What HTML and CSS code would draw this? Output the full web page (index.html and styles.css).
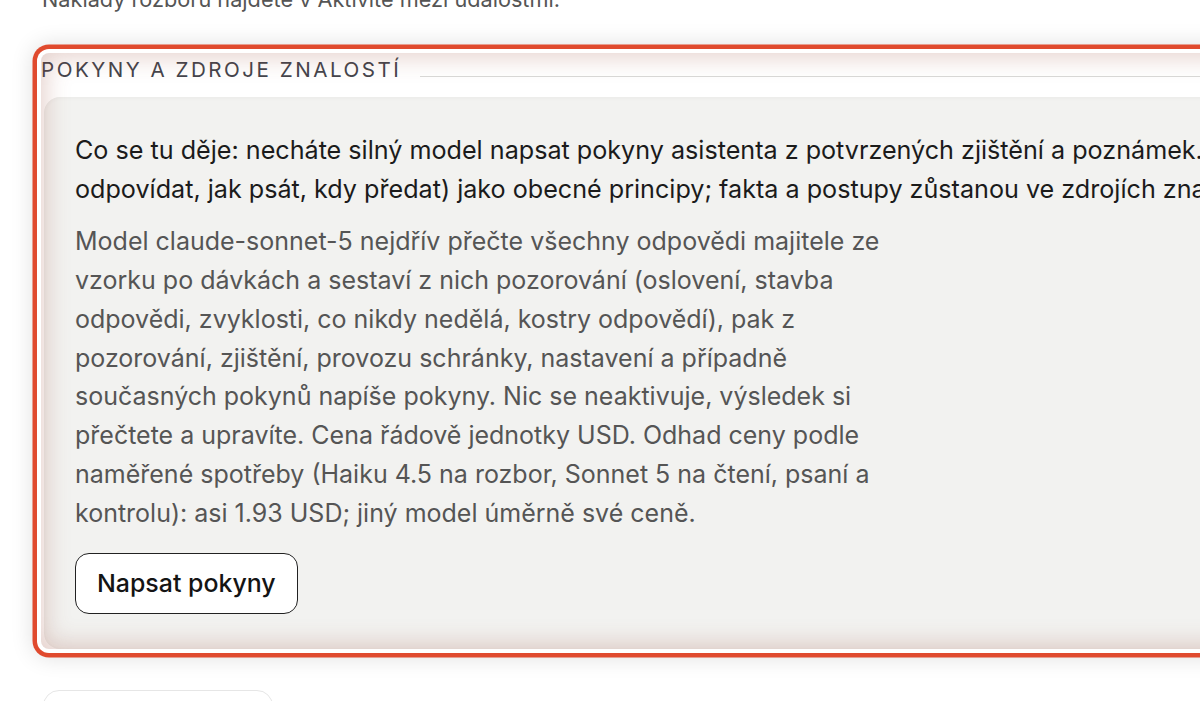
FILE: index.html
```html
<!DOCTYPE html>
<html lang="cs">
<head>
<meta charset="utf-8">
<title>Pokyny a zdroje znalostí</title>
<link rel="stylesheet" href="styles.css">
</head>
<body>
<main class="page">
  <p class="note">Náklady rozboru najdete v Aktivitě mezi událostmi.</p>

  <section class="panel is-highlighted">
    <div class="legend">
      <h2 class="legend-title">POKYNY A ZDROJE ZNALOSTÍ</h2>
      <div class="legend-rule"></div>
    </div>
    <div class="card">
      <p class="lead">Co se tu děje: necháte silný model napsat pokyny asistenta z potvrzených zjištění a poznámek. Pokyny popíší chování (jak<br>odpovídat, jak psát, kdy předat) jako obecné principy; fakta a postupy zůstanou ve zdrojích znalostí.</p>
      <p class="desc">Model claude-sonnet-5 nejdřív přečte všechny odpovědi majitele ze vzorku po dávkách a sestaví z nich pozorování (oslovení, stavba odpovědi, zvyklosti, co nikdy nedělá, kostry odpovědí), pak z pozorování, zjištění, provozu schránky, nastavení a případně současných pokynů napíše pokyny. Nic se neaktivuje, výsledek si přečtete a upravíte. Cena řádově jednotky USD. Odhad ceny podle naměřené spotřeby (Haiku 4.5 na rozbor, Sonnet 5 na čtení, psaní a kontrolu): asi 1.93 USD; jiný model úměrně své ceně.</p>
      <button class="btn" type="button">Napsat pokyny</button>
    </div>
  </section>

  <div class="next-block"></div>
</main>
</body>
</html>
```

FILE: styles.css
```css
html, body {
  margin: 0;
  padding: 0;
  background: #ffffff;
  overflow: hidden;
}

body {
  font-family: Inter, "Noto Sans", "DejaVu Sans", sans-serif;
  color: #1b1b1b;
}

.page {
  width: 1700px;
  padding-left: 41px;
  margin-top: -20.5px;
}

.note {
  margin: 0 0 0 1px;
  font-size: 21.7px;
  line-height: 38.9px;
  color: #555555;
}

.panel {
  position: relative;
  margin-top: 34.5px;
  border-radius: 8px;
  background: #ffffff;
  box-shadow:
    0 0 0 4px #ffffff,
    0 0 0 8.5px #e04a2e,
    0 0 22px 9px rgba(0, 0, 0, 0.12);
}

.panel.is-highlighted::after {
  content: "";
  position: absolute;
  inset: 0;
  border-radius: 8px;
  pointer-events: none;
  box-shadow: inset 0 0 24px 4px rgba(150, 70, 50, 0.26);
}

.legend {
  display: flex;
  align-items: baseline;
  gap: 19px;
  padding-top: 4px;
}

.legend-title {
  margin: 0;
  font-size: 20.6px;
  line-height: 26.6px;
  font-weight: 400;
  letter-spacing: 2.5px;
  color: #44444c;
  white-space: nowrap;
}

.legend-rule {
  flex: 1;
  height: 1px;
  background: #dadad8;
}

.card {
  margin: 13px 0 0 3px;
  padding: 34.5px 31px 35.5px 31px;
  background: #f2f2f0;
  border-radius: 16px;
  box-shadow: inset 0 1px 4px rgba(0, 0, 0, 0.04);
}

.lead {
  margin: 0 0 13px 0;
  font-size: 25.15px;
  line-height: 38.9px;
  color: #1b1b1b;
  white-space: nowrap;
}

.desc {
  margin: 0;
  max-width: 820px;
  font-size: 25px;
  line-height: 38.9px;
  color: #555555;
}

.btn {
  display: block;
  margin-top: 20px;
  padding: 15.5px 21px;
  font-family: inherit;
  font-size: 24.9px;
  line-height: 27.5px;
  font-weight: 500;
  color: #141414;
  background: #ffffff;
  border: 1.5px solid #222222;
  border-radius: 14px;
}

.next-block {
  margin: 40.5px 0 0 2px;
  width: 228px;
  height: 60px;
  background: #ffffff;
  border: 1.5px solid #e6e6e6;
  border-radius: 16px;
}
```
